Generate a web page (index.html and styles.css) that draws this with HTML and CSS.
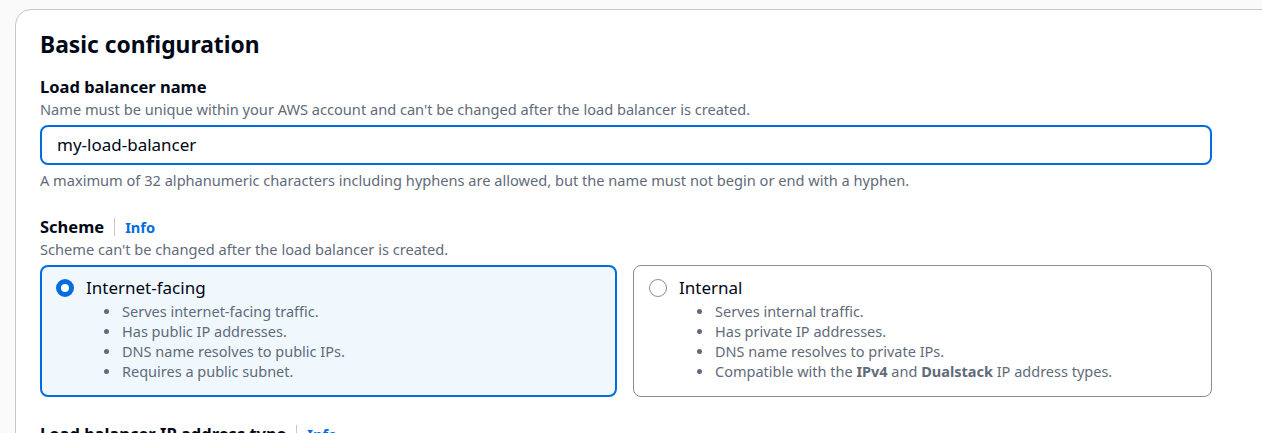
FILE: index.html
```html
<!DOCTYPE html>
<html lang="en">
<head>
<meta charset="utf-8">
<title>Basic configuration</title>
<link rel="stylesheet" href="styles.css">
</head>
<body>
<div class="page">
  <section class="card">
    <div class="content">
      <h2 class="title">Basic configuration</h2>

      <div class="field">
        <div class="label">Load balancer name</div>
        <div class="desc">Name must be unique within your AWS account and can't be changed after the load balancer is created.</div>
        <div class="input">my-load-balancer</div>
        <div class="constraint">A maximum of 32 alphanumeric characters including hyphens are allowed, but the name must not begin or end with a hyphen.</div>
      </div>

      <div class="field">
        <div class="label">Scheme <span class="sep"></span><a class="info">Info</a></div>
        <div class="desc">Scheme can't be changed after the load balancer is created.</div>
        <div class="tiles">
          <div class="tile selected">
            <div class="tile-head"><span class="radio checked"></span><span class="tile-label">Internet-facing</span></div>
            <ul class="bullets">
              <li>Serves internet-facing traffic.</li>
              <li>Has public IP addresses.</li>
              <li>DNS name resolves to public IPs.</li>
              <li>Requires a public subnet.</li>
            </ul>
          </div>
          <div class="tile">
            <div class="tile-head"><span class="radio"></span><span class="tile-label">Internal</span></div>
            <ul class="bullets">
              <li>Serves internal traffic.</li>
              <li>Has private IP addresses.</li>
              <li>DNS name resolves to private IPs.</li>
              <li>Compatible with the <b>IPv4</b> and <b>Dualstack</b> IP address types.</li>
            </ul>
          </div>
        </div>
      </div>

      <div class="field next">
        <div class="label">Load balancer IP address type <span class="sep"></span><a class="info">Info</a></div>
      </div>
    </div>
  </section>
</div>
</body>
</html>
```

FILE: styles.css
```css
html, body {
  margin: 0;
  padding: 0;
  overflow: hidden;
  background: #fafafa;
}
body {
  font-family: "Noto Sans", "Open Sans", Arial, sans-serif;
  color: #000716;
}
.page {
  padding: 9px 0 0 15px;
}
.card {
  width: 1320px;
  background: #ffffff;
  border: 1px solid #c6c6cd;
  border-radius: 16px;
  padding: 20px 0 40px 24px;
  box-sizing: border-box;
}
.content {
  width: 1172px;
}
.title {
  margin: 0;
  font-size: 22.8px;
  line-height: 30px;
  font-weight: 700;
}
.field {
  margin-top: 16px;
}
.field + .field {
  margin-top: 26px;
}
.label {
  font-size: 16.5px;
  line-height: 22px;
  font-weight: 700;
  display: flex;
  align-items: center;
}
.sep {
  display: inline-block;
  width: 1px;
  height: 18px;
  background: #c6c6cd;
  margin: 0 10px 0 10px;
}
.info {
  color: #006ce0;
  font-size: 14.6px;
  font-weight: 700;
}
.desc, .constraint {
  font-size: 14.6px;
  line-height: 20px;
  color: #5f6b7a;
}
.desc {
  margin-top: 1px;
}
.input {
  margin-top: 6px;
  height: 40px;
  box-sizing: border-box;
  border: 2px solid #006ce0;
  border-radius: 8px;
  padding: 0 15px;
  font-size: 17px;
  line-height: 36px;
  color: #000716;
}
.constraint {
  margin-top: 5px;
}
.tiles {
  margin-top: 6px;
  display: grid;
  grid-template-columns: 577px 579px;
  gap: 16px;
}
.tile {
  border: 1px solid #8c8c94;
  border-radius: 8px;
  padding: 10px 15px 15px 15px;
  background: #ffffff;
  height: 132px;
  box-sizing: border-box;
}
.tile.selected {
  border: 2px solid #006ce0;
  background: #f0f8fe;
  padding: 9px 14px 14px 14px;
}
.tile-head {
  display: flex;
  align-items: center;
  height: 24px;
}
.radio {
  width: 18px;
  height: 18px;
  box-sizing: border-box;
  border: 1.5px solid #8c8c94;
  border-radius: 50%;
  background: #fff;
  flex: none;
}
.radio.checked {
  border: 5px solid #006ce0;
}
.tile-label {
  margin-left: 12px;
  font-size: 17px;
  line-height: 24px;
}
.bullets {
  margin: 1px 0 0 0;
  padding: 0 0 0 36px;
  list-style: none;
}
.bullets li {
  position: relative;
  font-size: 14.5px;
  line-height: 20px;
  color: #5f6b7a;
  padding-left: 30px;
}
.bullets li::before {
  content: "";
  position: absolute;
  left: 12px;
  top: 8px;
  width: 5px;
  height: 5px;
  border-radius: 50%;
  background: #5f6b7a;
}
.bullets li b {
  font-weight: 700;
}
.next {
  margin-top: 29px;
}
```
